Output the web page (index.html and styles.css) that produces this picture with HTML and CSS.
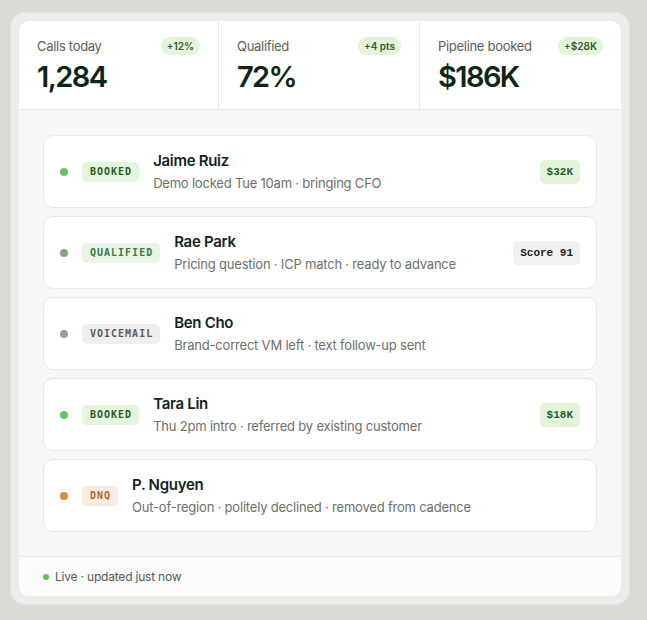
FILE: index.html
```html
<!DOCTYPE html>
<html lang="en">
<head>
<meta charset="utf-8">
<title>Calls dashboard</title>
<link rel="stylesheet" href="styles.css">
</head>
<body>
<div class="frame">
  <div class="card">
    <div class="stats">
      <div class="stat">
        <div class="stat-top"><span class="stat-label">Calls today</span><span class="delta">+12%</span></div>
        <div class="stat-value">1,284</div>
      </div>
      <div class="stat">
        <div class="stat-top"><span class="stat-label">Qualified</span><span class="delta">+4 pts</span></div>
        <div class="stat-value">72%</div>
      </div>
      <div class="stat">
        <div class="stat-top"><span class="stat-label">Pipeline booked</span><span class="delta">+$28K</span></div>
        <div class="stat-value">$186K</div>
      </div>
    </div>
    <div class="list">
      <div class="row">
        <span class="dot dot-green"></span>
        <span class="tag tag-booked">BOOKED</span>
        <div class="info"><div class="name">Jaime Ruiz</div><div class="sub">Demo locked Tue 10am · bringing CFO</div></div>
        <span class="chip chip-green">$32K</span>
      </div>
      <div class="row">
        <span class="dot dot-sage"></span>
        <span class="tag tag-qualified">QUALIFIED</span>
        <div class="info"><div class="name">Rae Park</div><div class="sub">Pricing question · ICP match · ready to advance</div></div>
        <span class="chip chip-grey">Score 91</span>
      </div>
      <div class="row">
        <span class="dot dot-grey"></span>
        <span class="tag tag-voicemail">VOICEMAIL</span>
        <div class="info"><div class="name">Ben Cho</div><div class="sub">Brand-correct VM left · text follow-up sent</div></div>
      </div>
      <div class="row">
        <span class="dot dot-green"></span>
        <span class="tag tag-booked">BOOKED</span>
        <div class="info"><div class="name">Tara Lin</div><div class="sub">Thu 2pm intro · referred by existing customer</div></div>
        <span class="chip chip-green">$18K</span>
      </div>
      <div class="row">
        <span class="dot dot-orange"></span>
        <span class="tag tag-dnq">DNQ</span>
        <div class="info"><div class="name">P. Nguyen</div><div class="sub">Out-of-region · politely declined · removed from cadence</div></div>
      </div>
    </div>
    <div class="footer"><span class="live-dot"></span><span>Live · updated just now</span></div>
  </div>
</div>
</body>
</html>
```
FILE: styles.css
```css
* { box-sizing: border-box; }
html, body { margin: 0; }
body {
  background: #d8dcd5;
  font-family: Inter, "Noto Sans", sans-serif;
  padding: 12px 17px 15px 10px;
  color: #10261a;
}
.frame {
  width: 620px;
  padding: 9px;
  background: #ebede9;
  box-shadow: inset 0 0 0 1px #e2e5e0;
  border-radius: 16px;
}
.card {
  background: #ffffff;
  border-radius: 10px;
  overflow: hidden;
}
.stats {
  display: grid;
  grid-template-columns: 200px 201px 1fr;
  border-bottom: 1px solid #e7e9e5;
}
.stat {
  padding: 16px 18px 18px 18px;
  border-right: 1px solid #e7e9e5;
  height: 88px;
}
.stat:last-child { border-right: none; }
.stat-top {
  display: flex;
  justify-content: space-between;
  align-items: center;
  height: 18px;
}
.stat-label {
  font-size: 13px;
  color: #5b5e5a;
  letter-spacing: -0.3px;
}
.delta {
  font-size: 10px;
  font-weight: 600;
  color: #2f5a2c;
  background: #e2f4da;
  border-radius: 9px;
  padding: 0 6px;
  height: 18px;
  line-height: 18px;
}
.stat-value {
  margin-top: 5px;
  font-size: 29px;
  font-weight: 600;
  letter-spacing: -1.6px;
  line-height: 34px;
  color: #0e2616;
}
.list {
  background: #f7f8f6;
  padding: 25px 24px 24px 24px;
  display: flex;
  flex-direction: column;
  gap: 8px;
}
.row {
  display: flex;
  align-items: center;
  gap: 14px;
  background: #ffffff;
  border: 1px solid #e7eae4;
  border-radius: 10px;
  height: 73px;
  padding: 0 16px;
}
.dot {
  width: 8px;
  height: 8px;
  border-radius: 50%;
  flex: none;
}
.dot-green { background: #62c662; }
.dot-sage { background: #7fa77a; }
.dot-grey { background: #9a9c99; }
.dot-orange { background: #d98a3a; }
.tag {
  font-family: "DejaVu Sans Mono", "Liberation Mono", monospace;
  font-size: 10px;
  font-weight: 700;
  letter-spacing: 1px;
  height: 20px;
  line-height: 20px;
  padding: 0 7px 0 8px;
  border-radius: 5px;
  flex: none;
}
.tag-booked { background: #e3f5dc; color: #2e5a2b; }
.tag-qualified { background: #e9f3e6; color: #3b7a47; }
.tag-voicemail { background: #eeefed; color: #5a5d59; }
.tag-dnq { background: #f8ebe1; color: #b8652a; }
.info { flex: 1; min-width: 0; }
.name {
  font-size: 15px;
  font-weight: 600;
  color: #10261a;
  letter-spacing: -0.3px;
  line-height: 20px;
}
.sub {
  margin-top: 3px;
  font-size: 13px;
  color: #6c6f6b;
  letter-spacing: -0.2px;
  line-height: 18px;
}
.chip {
  font-family: "Liberation Mono", "DejaVu Sans Mono", monospace;
  font-size: 11px;
  font-weight: 700;
  height: 24px;
  line-height: 24px;
  padding: 0 7px;
  border-radius: 5px;
  flex: none;
}
.chip-green { background: #e2f5d9; color: #2e5a2b; }
.chip-grey { background: #f1f2f0; color: #1b221d; }
.footer {
  display: flex;
  align-items: center;
  gap: 6px;
  border-top: 1px solid #e7e9e5;
  background: #fbfbfa;
  height: 40px;
  padding: 0 24px;
  font-size: 12px;
  color: #555955;
  letter-spacing: -0.2px;
}
.live-dot {
  width: 6px;
  height: 6px;
  border-radius: 50%;
  background: #5ec45e;
}
```
